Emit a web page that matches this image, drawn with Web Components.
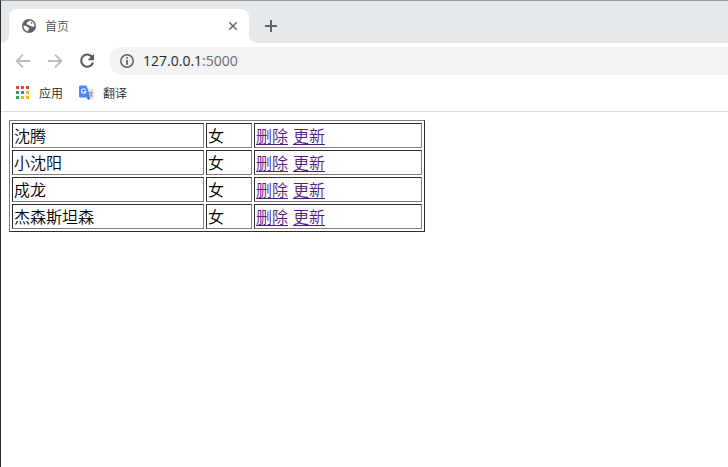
<!DOCTYPE html>
<html lang="zh-CN">
<head>
<meta charset="utf-8">
<title>首页</title>
<style>
body{margin:0;background:#fff;font-family:"Noto Sans CJK SC",sans-serif;font-weight:350;overflow:hidden}
</style>
</head>
<body>
<browser-window>
  <tab-strip slot="tabs"><browser-tab>首页</browser-tab></tab-strip>
  <address-bar slot="bar"><span>127.0.0.1</span><span slot="port">:5000</span></address-bar>
  <bookmark-bar slot="marks">
    <book-mark icon="apps">应用</book-mark>
    <book-mark icon="translate">翻译</book-mark>
  </bookmark-bar>
  <people-table>
    <person-row name="沈腾" sex="女"></person-row>
    <person-row name="小沈阳" sex="女"></person-row>
    <person-row name="成龙" sex="女"></person-row>
    <person-row name="杰森斯坦森" sex="女"></person-row>
  </people-table>
</browser-window>
<script>
const define = (tag, html) => customElements.define(tag, class extends HTMLElement {
  constructor() {
    super();
    this.attachShadow({mode: "open"}).innerHTML = typeof html === "function" ? html(this) : html;
  }
});

define("browser-window", `<style>
:host{display:flex;flex-direction:column;box-sizing:border-box;width:728px;height:467px;border-left:1px solid #2b2b2d;border-top:1px solid #999ca1;background:#fff}
main{padding:8px}
</style><slot name="tabs"></slot><slot name="bar"></slot><slot name="marks"></slot><main><slot></slot></main>`);

define("tab-strip", `<style>
:host{display:flex;align-items:flex-end;height:42px;background:#e5e9ec;flex:none}
svg{display:block;margin:0 0 11px 16px}
</style><slot></slot><svg width="12" height="12" viewBox="0 0 12 12"><path d="M6 0v12M0 6h12" stroke="#5f6368" stroke-width="2"/></svg>`);

define("browser-tab", `<style>
:host{display:flex;align-items:center;box-sizing:border-box;width:240px;height:34px;margin-left:8px;padding:0 12px 0 13px;background:#fff;border-radius:8px 8px 0 0;position:relative;font-size:12px;line-height:18px;color:#505358}
:host::before,:host::after{content:"";position:absolute;bottom:0;width:8px;height:8px}
:host::before{left:-8px;background:radial-gradient(circle at 0 0,transparent 7.5px,#fff 8.5px)}
:host::after{right:-8px;background:radial-gradient(circle at 100% 0,transparent 7.5px,#fff 8.5px)}
span{flex:1;margin-left:9px}
svg{display:block}
</style><svg width="14" height="14" viewBox="0 0 14 14"><circle cx="7" cy="7" r="7" fill="#5f6368"/><path d="M7.600 1.600C7.200 2.900 5.200 3 4.800 4.200c-.3 1 .6 1.500 1.500 1.600.8 0 .9.900 1.800 1 1 .2 1.200.900 2.200.900.900 0 1.400-.3 2.100-.2C12.600 4.400 10.500 1.800 7.600 1.600z" fill="#fff"/><path d="M8.800 3.200c1 .2.600 1.300 1.500 1.600" fill="none" stroke="#5f6368" stroke-width="1.200"/><path d="M1.500 6.800c1.800-.1 3.200.2 4 1.200.6.700 1.800.500 1.800 1.500 0 .8-1.100.9-1.100 1.600v1.400C3.400 12.200 1.500 9.800 1.500 6.800z" fill="#fff"/></svg>
<span><slot></slot></span>
<svg width="8" height="8" viewBox="0 0 8 8"><path d="M.300.300l7.400 7.400M7.700.300l-7.400 7.400" stroke="#5f6368" stroke-width="1.400"/></svg>`);

define("address-bar", `<style>
:host{display:flex;align-items:center;height:36px;padding-left:14px;flex:none}
svg{display:block;flex:none}
.back{margin-right:17px}.next{margin-right:17px}.reload{margin-right:14px}
.box{display:flex;align-items:center;flex:1;height:28px;background:#f1f3f4;border-radius:14px 0 0 14px;padding-left:11px;font:400 14px/20px "Open Sans",sans-serif;color:#25272a}
.box svg{margin-right:9px}
.port{color:#6a6e73}
</style>
<svg class="back" width="15" height="14" viewBox="0 0 15 14"><path d="M15 7H2M8 .700L1.700 7 8 13.300" fill="none" stroke="#babcbe" stroke-width="1.900"/></svg>
<svg class="next" width="15" height="14" viewBox="0 0 15 14"><path d="M1 7h13M8 .700L14.300 7 8 13.300" fill="none" stroke="#babcbe" stroke-width="1.900"/></svg>
<svg class="reload" width="16" height="16" viewBox="0 0 16 16"><path d="M13.300 4.200A6.100 6.100 0 1 0 14 9.600" fill="none" stroke="#55595e" stroke-width="2.100"/><path d="M15 .800v6.400H8.600z" fill="#55595e"/></svg>
<div class="box"><svg width="14" height="14" viewBox="0 0 14 14"><circle cx="7" cy="7" r="6.200" fill="none" stroke="#5f6368" stroke-width="1.500"/><path d="M7 3.200v1.600M7 6v4.700" stroke="#5f6368" stroke-width="1.800"/></svg><slot></slot><span class="port"><slot name="port"></slot></span></div>`);

define("bookmark-bar", `<style>
:host{display:flex;align-items:center;gap:16px;box-sizing:border-box;height:33px;padding:0 0 5px 14px;border-bottom:1px solid #dadce0;flex:none}
</style><slot></slot>`);

const icons = {
  apps: `<svg width="15" height="16" viewBox="0 0 15 16" shape-rendering="crispEdges"><path d="M1 1h3v3H1zM6 1h3v3H6zM11 1h3v3h-3z" fill="#ee4034"/><path d="M1 6h3v3H1zM1 11h3v3H1z" fill="#34a05b"/><path d="M6 6h3v3H6z" fill="#2187ee"/><path d="M11 6h3v3h-3zM6 11h3v3H6zM11 11h3v3h-3z" fill="#fbb40a"/></svg>`,
  translate: `<svg width="15" height="16" viewBox="0 0 15 16"><path d="M6 3.500h8q1 0 1 1v9.500q0 1-1 1H9z" fill="#e3e5e7"/><path d="M1 .500h6.500l3.800 12H1q-1 0-1-1v-10q0-1 1-1z" fill="#4a8af4"/><path d="M7.500 12.500h3.800L9.300 15z" fill="#3451b4"/><path d="M6.700 4.900A2.200 2.200 0 1 0 6.900 6.500H4.900" fill="none" stroke="#eef4ff" stroke-width="1.200"/><path d="M9.800 7.500h4.200M11.800 6.500v1M13 7.700c-.3 1.800-1 2.900-2.200 3.700M10.800 8.500c.6 1.400 1.400 2.400 2.800 3.300" fill="none" stroke="#7d8793" stroke-width=".8"/></svg>`
};
define("book-mark", el => `<style>
:host{display:flex;align-items:center;gap:9px;font-size:12px;line-height:18px;color:#25272b}
svg{display:block}
</style>${icons[el.getAttribute("icon")]}<span><slot></slot></span>`);

define("people-table", `<style>
:host{display:flex;flex-direction:column;gap:2px;box-sizing:border-box;width:416px;padding:2px;border:1px solid;border-color:#808080 #2c2c2c #2c2c2c #808080}
</style><slot></slot>`);

define("person-row", el => `<style>
:host{display:grid;grid-template-columns:192px 46px 168px;gap:2px;font-size:16px;line-height:21px;color:#000}
div{box-sizing:border-box;height:25px;padding:1px;border:1px solid;border-color:#2c2c2c #808080 #808080 #2c2c2c;white-space:nowrap}
.ops{display:flex;gap:5px}
a{color:#551a8b;text-decoration:underline;text-decoration-thickness:1px;text-underline-offset:2px}
</style><div>${el.getAttribute("name")}</div><div>${el.getAttribute("sex")}</div><div class="ops"><a href="#">删除</a><a href="#">更新</a></div>`);
</script>
</body>
</html>
